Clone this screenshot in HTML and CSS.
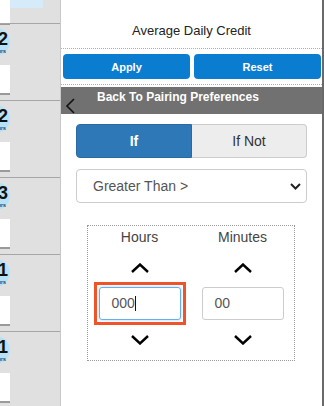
FILE: index.html
```html
<!DOCTYPE html>
<html lang="en">
<head>
    <meta charset="UTF-8">
    <meta name="viewport" content="width=device-width, initial-scale=1.0">
    <title>Average Daily Credit</title>
    <link rel="stylesheet" href="styles.css">
</head>
<body>
    <div class="screen">
        <!-- Pairing list, mostly hidden behind the filter panel -->
        <aside class="trips">
            <div class="trip-head">
                <div class="trip-card"></div>
                <div class="trip-tag"></div>
            </div>
            <div class="trip">
                <div class="trip-badge"><b>2</b><small>hrs</small></div>
                <div class="trip-card"></div>
            </div>
            <div class="trip">
                <div class="trip-badge"><b>2</b><small>hrs</small></div>
                <div class="trip-card"></div>
            </div>
            <div class="trip">
                <div class="trip-badge"><b>3</b><small>hrs</small></div>
                <div class="trip-card"></div>
            </div>
            <div class="trip">
                <div class="trip-badge"><b>1</b><small>hrs</small></div>
                <div class="trip-card"></div>
            </div>
            <div class="trip">
                <div class="trip-badge"><b>1</b><small>hrs</small></div>
                <div class="trip-card"></div>
            </div>
        </aside>

        <!-- Filter panel -->
        <main class="panel">
            <h1 class="panel-title">Average Daily Credit</h1>

            <div class="actions">
                <button class="btn">Apply</button>
                <button class="btn">Reset</button>
            </div>

            <div class="back-bar">
                <svg class="back-icon" width="11" height="16" viewBox="0 0 11 16">
                    <polyline points="9,1 2,8 9,15" fill="none" stroke="#111" stroke-width="1.6"/>
                </svg>
                <span>Back To Pairing Preferences</span>
            </div>

            <div class="panel-body">
                <div class="toggle">
                    <button class="toggle-opt active">If</button>
                    <button class="toggle-opt">If Not</button>
                </div>

                <div class="select">
                    <span>Greater Than &gt;</span>
                    <svg width="11" height="7" viewBox="0 0 11 7">
                        <polyline points="1,1 5.5,5.5 10,1" fill="none" stroke="#222" stroke-width="2"/>
                    </svg>
                </div>

                <div class="time-box">
                    <div class="time-col">
                        <div class="time-label">Hours</div>
                        <svg class="arrow" width="18" height="10" viewBox="0 0 18 10">
                            <polyline points="1,9 9,1.5 17,9" fill="none" stroke="#000" stroke-width="2.4"/>
                        </svg>
                        <div class="time-field focused">
                            <div class="time-input">000<span class="caret"></span></div>
                        </div>
                        <svg class="arrow arrow-down" width="18" height="10" viewBox="0 0 18 10">
                            <polyline points="1,1 9,8.5 17,1" fill="none" stroke="#000" stroke-width="2.4"/>
                        </svg>
                    </div>
                    <div class="time-col">
                        <div class="time-label">Minutes</div>
                        <svg class="arrow" width="18" height="10" viewBox="0 0 18 10">
                            <polyline points="1,9 9,1.5 17,9" fill="none" stroke="#000" stroke-width="2.4"/>
                        </svg>
                        <div class="time-field">
                            <div class="time-input">00</div>
                        </div>
                        <svg class="arrow arrow-down" width="18" height="10" viewBox="0 0 18 10">
                            <polyline points="1,1 9,8.5 17,1" fill="none" stroke="#000" stroke-width="2.4"/>
                        </svg>
                    </div>
                </div>
            </div>
        </main>
    </div>
</body>
</html>
```

FILE: styles.css
```css
* {
    margin: 0;
    padding: 0;
    box-sizing: border-box;
}

body {
    font-family: 'Liberation Sans', Arial, sans-serif;
    background: #fff;
    overflow: hidden;
}

.screen {
    display: flex;
    width: 324px;
    height: 406px;
}

/* Left pairing list */
.trips {
    width: 61px;
    flex-shrink: 0;
    background: #e0e0e0;
    border-right: 1px solid #c8c8c8;
    overflow: hidden;
    display: flex;
    flex-direction: column;
}

.trip-head {
    height: 30px;
    display: flex;
    align-items: flex-start;
}

.trip-head .trip-card {
    margin-top: 0;
    height: 23px;
}

.trip-tag {
    width: 33px;
    height: 8px;
    background: #d6ebfa;
}

.trip {
    height: 77px;
    flex-shrink: 0;
    border-top: 1px solid #a6a6a6;
}

.trip-badge {
    width: 30px;
    height: 28px;
    margin: 4px 0 0 -20px;
    border-radius: 50%;
    background: #b5e2f7;
    color: #111;
    text-align: right;
    padding: 2px 2px 0 0;
}

.trip-badge b {
    display: block;
    font-size: 18px;
    line-height: 18px;
}

.trip-badge small {
    display: block;
    font-size: 6px;
    line-height: 7px;
    padding-right: 2px;
}

.trip-card {
    width: 50px;
    height: 28px;
    margin: 9px 0 0 -40px;
    background: #fff;
    box-shadow: 0 2px 0 #9a9a9a;
}

/* Filter panel */
.panel {
    width: 263px;
    flex-shrink: 0;
    border-right: 2px solid #6a6a6a;
    display: flex;
    flex-direction: column;
}

.panel-title {
    height: 49px;
    padding-top: 22px;
    font-size: 13px;
    line-height: 18px;
    font-weight: normal;
    color: #222;
    text-align: center;
    border-bottom: 1px dotted #b0b0b0;
}

.actions {
    display: flex;
    gap: 4px;
    padding: 5px 1px 5px 2px;
    border-bottom: 1px dotted #b0b0b0;
}

.btn {
    flex: 1;
    height: 25px;
    border: none;
    border-radius: 4px;
    background: #0b7dd1;
    color: #fff;
    font-family: inherit;
    font-size: 11px;
    font-weight: bold;
}

.back-bar {
    margin-top: 2px;
    height: 27px;
    background: #717171;
    display: flex;
    align-items: flex-start;
}

.back-icon {
    margin: 11px 0 0 4px;
}

.back-bar span {
    margin: 3px 0 0 21px;
    color: #fff;
    font-size: 12px;
    line-height: 14px;
    font-weight: bold;
}

.panel-body {
    padding: 10px 15px 0;
}

/* If / If Not switch */
.toggle {
    display: flex;
    height: 34px;
}

.toggle-opt {
    flex: 1;
    font-family: inherit;
    font-size: 14px;
    color: #333;
    background: #ededed;
    border: 1px solid #ccc;
    border-left: none;
    border-radius: 0 4px 4px 0;
}

.toggle-opt.active {
    color: #fff;
    font-weight: bold;
    background: #2f78b7;
    border: 1px solid #2a6aa3;
    border-radius: 4px 0 0 4px;
}

.select {
    margin-top: 11px;
    height: 34px;
    border: 1px solid #ccc;
    border-radius: 4px;
    display: flex;
    align-items: center;
    justify-content: space-between;
    padding: 0 5px 0 16px;
    font-size: 14px;
    color: #555;
}

/* Hours / minutes picker */
.time-box {
    margin: 22px 12px 0 11px;
    height: 136px;
    border: 1px dotted #999;
    display: grid;
    grid-template-columns: 1fr 1fr;
}

.time-col {
    display: flex;
    flex-direction: column;
    align-items: center;
    padding-top: 3px;
}

.time-label {
    font-size: 14px;
    line-height: 16px;
    color: #444;
}

.arrow {
    margin-top: 18px;
}

.arrow-down {
    margin-top: 10px;
}

.time-field {
    margin-top: 9px;
    padding: 2px;
    border: 3px solid transparent;
}

.time-field.focused {
    border-color: #f0532a;
}

.time-input {
    width: 82px;
    height: 33px;
    border: 1px solid #ccc;
    border-radius: 3px;
    padding-left: 12px;
    font-size: 14px;
    line-height: 31px;
    color: #555;
}

.focused .time-input {
    border-color: #66afe9;
    box-shadow: 0 0 3px rgba(102, 175, 233, 0.6);
}

.caret {
    display: inline-block;
    width: 1px;
    height: 15px;
    background: #111;
    vertical-align: -3px;
}
```
